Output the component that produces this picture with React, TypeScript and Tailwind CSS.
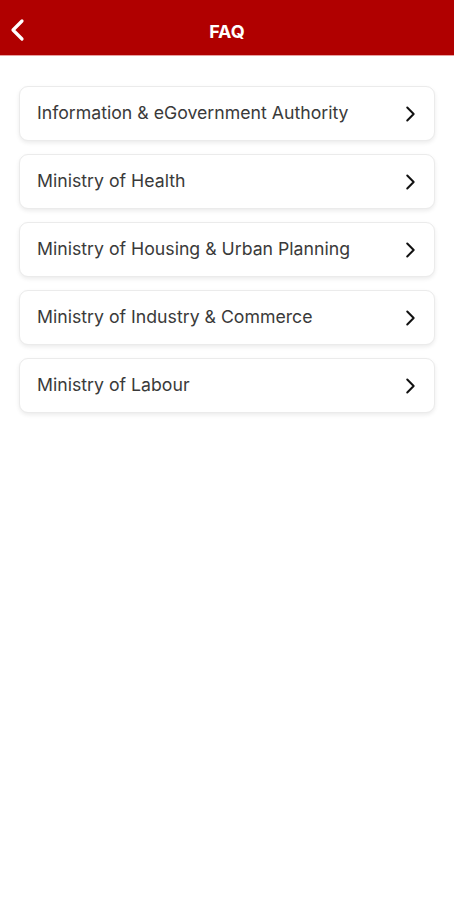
import React from 'react';

const items = [
  'Information & eGovernment Authority',
  'Ministry of Health',
  'Ministry of Housing & Urban Planning',
  'Ministry of Industry & Commerce',
  'Ministry of Labour',
];

function Chevron({ className }: { className?: string }) {
  return (
    <svg viewBox="0 0 24 24" fill="none" stroke="currentColor" strokeWidth={2.2} strokeLinecap="round" strokeLinejoin="round" className={className}>
      <path d="M9 5l7 7-7 7" />
    </svg>
  );
}

export default function App() {
  return (
    <div className="min-h-[900px] w-[454px] bg-white" style={{ fontFamily: 'Inter, "Liberation Sans", sans-serif' }}>
      <header className="h-[56px] bg-[#b00000] border-b border-[#e8a0a0] flex items-center relative">
        <button className="absolute left-[6px] top-[17px] text-white">
          <svg viewBox="0 0 24 24" fill="none" stroke="currentColor" strokeWidth={3.2} strokeLinecap="round" strokeLinejoin="round" className="w-[24px] h-[26px]">
            <path d="M16 3L7 12l9 9" />
          </svg>
        </button>
        <h1 className="flex-1 text-center text-white font-bold text-[18px] pt-[7px]">FAQ</h1>
      </header>
      <div className="px-[19px] pt-[30px] flex flex-col gap-[13px]">
        {items.map((t) => (
          <div key={t} className="h-[55px] rounded-[9px] border border-[#ebebeb] bg-white shadow-[0_2px_4px_rgba(0,0,0,0.08)] flex items-center justify-between pl-[17px] pr-[13px]">
            <span className="text-[17.7px] font-[380] text-[#3a3a3a]">{t}</span>
            <Chevron className="w-[22px] h-[22px] text-[#111111]" />
          </div>
        ))}
      </div>
    </div>
  );
}
